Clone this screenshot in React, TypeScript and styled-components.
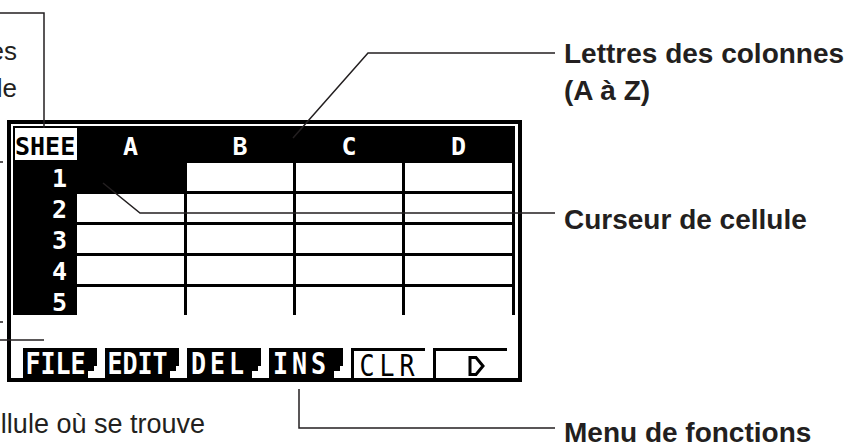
import React from 'react'
import styled, { createGlobalStyle } from 'styled-components'

const GlobalStyle = createGlobalStyle`
  html, body {
    margin: 0;
    padding: 0;
    background: #fff;
  }
  body {
    font-family: "Liberation Sans", Arial, Helvetica, sans-serif;
    color: #231f20;
  }
`

const Page = styled.div`
  position: relative;
  width: 850px;
  height: 443px;
  overflow: hidden;
  display: flex;
  background: #fff;
`

const LeftCol = styled.div`
  width: 564px;
  flex-shrink: 0;
  display: flex;
  flex-direction: column;
`

const Note = styled.div<{ $right: number; $top: number; $size: number }>`
  box-sizing: border-box;
  width: ${(p) => p.$right + 400}px;
  margin-left: -400px;
  margin-top: ${(p) => p.$top}px;
  text-align: right;
  font-size: ${(p) => p.$size}px;
  line-height: 37px;
  white-space: nowrap;
`

const TopNote = styled(Note)`
  height: 122px;
  padding-top: 33px;
`

const Screen = styled.div`
  box-sizing: border-box;
  width: 515px;
  height: 267px;
  margin-left: 7px;
  border: 4px solid #000;
  padding: 2px 3px 0 2px;
  background: #fff;
  display: flex;
  flex-direction: column;
`

const Sheet = styled.div`
  display: grid;
  grid-template-columns: 59px 107px 106px 106px 107px;
  grid-template-rows: 32px repeat(5, 28px);
  gap: 3px;
  background: #000;
  border-top: 2px solid #000;
  border-left: 2px solid #000;
  padding-right: 3px;
`

const lcd = `
  font-family: "DejaVu Sans Mono", "Liberation Mono", monospace;
  font-weight: bold;
  font-size: 25px;
  line-height: 1;
`

const SheetName = styled.div`
  ${lcd}
  width: calc(100% + 3px);
  background: #fff;
  color: #000;
  display: flex;
  align-items: center;
  padding-top: 4px;
  box-sizing: border-box;
  overflow: hidden;
  white-space: nowrap;
`

const ColHead = styled.div`
  ${lcd}
  color: #fff;
  display: flex;
  align-items: center;
  justify-content: center;
  padding-top: 4px;
`

const RowHead = styled.div`
  ${lcd}
  color: #fff;
  display: flex;
  align-items: center;
  justify-content: flex-end;
  padding: 3px 7px 0 0;
`

const Cell = styled.div<{ $active?: boolean }>`
  background: ${(p) => (p.$active ? '#000' : '#fff')};
`

const MenuBar = styled.div`
  display: flex;
  gap: 8px;
  margin-top: 33px;
  padding-left: 10px;
`

const MenuKey = styled.div<{ $outline?: boolean; $spacing?: number }>`
  box-sizing: border-box;
  width: 74px;
  height: 30px;
  display: flex;
  align-items: center;
  justify-content: center;
  font-family: "DejaVu Sans Mono", "Liberation Mono", monospace;
  font-size: 25px;
  line-height: 1;
  letter-spacing: ${(p) => p.$spacing ?? 0}px;
  ${(p) =>
    p.$outline
      ? `
    border-left: 3px solid #000;
    border-top: 3px solid #000;
    color: #000;
    font-weight: normal;
    padding-top: 2px;
  `
      : `
    background: #000;
    color: #fff;
    font-weight: bold;
    padding-right: 9px;
    clip-path: polygon(0 0, 100% 0, 100% 18px, calc(100% - 3px) 18px, calc(100% - 3px) 23px, calc(100% - 9px) 23px, calc(100% - 9px) 100%, 0 100%);
  `}
`

const KeyText = styled.span`
  display: inline-block;
  transform: scaleY(1.22);
`

const ArrowSlot = styled.span`
  display: flex;
  padding-left: 10px;
`

const RightCol = styled.div`
  display: flex;
  flex-direction: column;
  padding-top: 35px;
`

const Label = styled.div<{ $gap: number }>`
  margin-top: ${(p) => p.$gap}px;
  font-size: 28px;
  font-weight: bold;
  line-height: 37px;
  white-space: nowrap;
`

const Leaders = styled.svg`
  position: absolute;
  left: 0;
  top: 0;
  width: 850px;
  height: 443px;
  pointer-events: none;
`

const columns = ['A', 'B', 'C', 'D']
const rows = [1, 2, 3, 4, 5]

const keys: { label: string; outline?: boolean; spacing?: number }[] = [
  { label: 'FILE' },
  { label: 'EDIT' },
  { label: 'DEL', spacing: 4 },
  { label: 'INS', spacing: 4 },
  { label: 'CLR', outline: true, spacing: 5 },
]

const lines = [
  '0,13 44,13 44,128',
  '293,138 368,53 555,53',
  '103,183 140,213 555,213',
  '299,389 299,428 555,428',
  '0,162 3,162',
  '0,322 3,322',
  '0,340 44,340',
]

function NextArrow() {
  return (
    <svg width="17" height="20" viewBox="0 0 17 20">
      <path d="M2 1.5 H8 L15 10 L8 18.5 H2 Z" fill="none" stroke="#000" strokeWidth="3" strokeLinejoin="miter" />
    </svg>
  )
}

export default function App() {
  return (
    <Page>
      <GlobalStyle />
      <LeftCol>
        <TopNote $right={17} $top={0} $size={26}>
          <div>Affiche autant de caractères</div>
          <div>du nom de fichier que possible</div>
        </TopNote>
        <Screen>
          <Sheet>
            <SheetName>SHEE</SheetName>
            {columns.map((c) => (
              <ColHead key={c}>{c}</ColHead>
            ))}
            {rows.map((r) => (
              <React.Fragment key={r}>
                <RowHead>{r}</RowHead>
                {columns.map((c) => (
                  <Cell key={c} $active={r === 1 && c === 'A'} />
                ))}
              </React.Fragment>
            ))}
          </Sheet>
          <MenuBar>
            {keys.map((k) => (
              <MenuKey key={k.label} $outline={k.outline} $spacing={k.spacing}>
                <KeyText>{k.label}</KeyText>
              </MenuKey>
            ))}
            <MenuKey $outline>
              <ArrowSlot>
                <NextArrow />
              </ArrowSlot>
            </MenuKey>
          </MenuBar>
        </Screen>
        <Note $right={205} $top={24} $size={27}>
          Contenu de la cellule où se trouve
        </Note>
      </LeftCol>
      <RightCol>
        <Label $gap={0}>
          Lettres des colonnes
          <br />
          (A à Z)
        </Label>
        <Label $gap={92}>Curseur de cellule</Label>
        <Label $gap={176}>Menu de fonctions</Label>
      </RightCol>
      <Leaders viewBox="0 0 850 443">
        {lines.map((pts) => (
          <polyline key={pts} points={pts} fill="none" stroke="#231f20" strokeWidth="1.5" />
        ))}
      </Leaders>
    </Page>
  )
}
